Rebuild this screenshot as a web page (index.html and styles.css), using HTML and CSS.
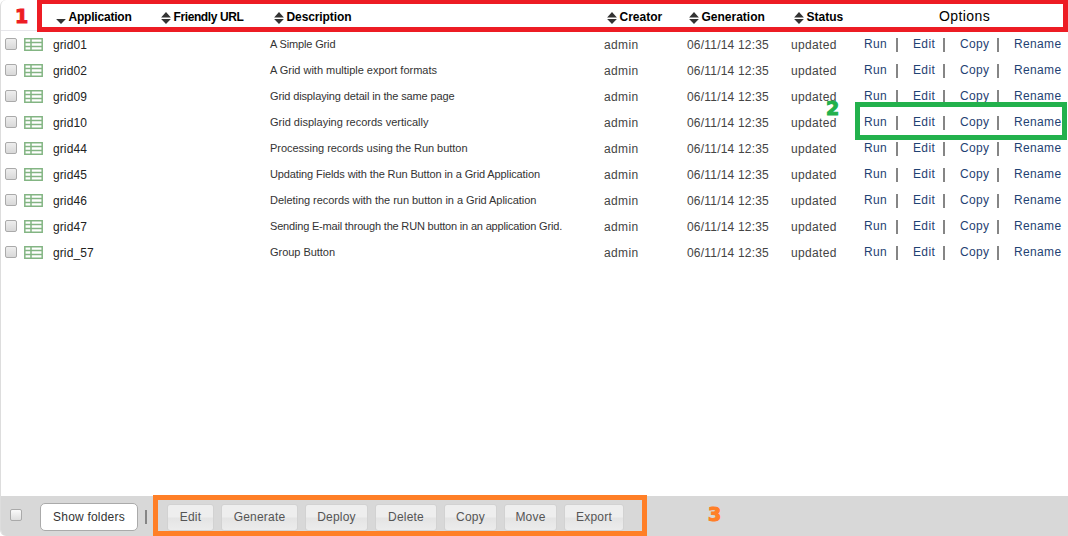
FILE: index.html
```
<!DOCTYPE html>
<html lang="en">
<head>
<meta charset="utf-8">
<title>Applications</title>
<link rel="stylesheet" href="styles.css">
</head>
<body>
<svg width="0" height="0" class="defs">
  <symbol id="sort" viewBox="0 0 10 12"><path d="M5 0L9.9 5.4H.1zM.1 7h9.8L5 12z" fill="#333"/></symbol>
  <symbol id="down" viewBox="0 0 10 12"><path d="M.1 7h9.8L5 12z" fill="#333"/></symbol>
  <symbol id="grid" viewBox="0 0 19 13"><path d="M.8 .8h17.4v11.4H.8zM7 1v11M1 4.5h17M1 8.5h17" fill="#fff" stroke="#83b583" stroke-width="1.5"/></symbol>
</svg>
<main class="panel">
  <header class="row head">
    <span class="c-app"><svg><use href="#down"/></svg><b class="h-app">Application</b></span>
    <span class="c-url"><svg><use href="#sort"/></svg><b class="h-url">Friendly URL</b></span>
    <span class="c-desc"><svg><use href="#sort"/></svg><b class="h-desc">Description</b></span>
    <span class="c-creator"><svg><use href="#sort"/></svg><b>Creator</b></span>
    <span class="c-gen"><svg><use href="#sort"/></svg><b>Generation</b></span>
    <span class="c-status"><svg><use href="#sort"/></svg><b>Status</b></span>
    <span class="c-options">Options</span>
  </header>
  <section id="rows" class="rows"></section>
  <footer class="bar">
    <i class="check light"></i>
    <button class="btn primary">Show folders</button>
    <i class="divider"></i>
    <div class="actions">
      <button class="btn w-edit">Edit</button>
      <button class="btn w-generate">Generate</button>
      <button class="btn w-deploy">Deploy</button>
      <button class="btn w-delete">Delete</button>
      <button class="btn w-copy">Copy</button>
      <button class="btn w-move">Move</button>
      <button class="btn w-export">Export</button>
    </div>
  </footer>
</main>
<i class="frame red"></i><i class="frame green"></i><i class="frame orange"></i>
<b class="mark one">1</b><b class="mark two">2</b><b class="mark three">3</b>
<script src="rows.js"></script>
</body>
</html>
```

FILE: styles.css
```
* { box-sizing: border-box; }
body { margin: 0; width: 1068px; height: 536px; overflow: hidden; background: #fff; font: 12px/16px "Liberation Sans", Arial, sans-serif; color: #444; }
.defs { position: absolute; }
.panel { height: 536px; display: flex; flex-direction: column; border-left: 1px solid #ddd; border-bottom-left-radius: 6px; border-top-left-radius: 6px; overflow: hidden; }
.row { display: grid; height: 26px; align-items: center; white-space: nowrap; }
.head { height: 31px; border-bottom: 1px solid #e6e6ea; padding: 3px 0 0 55px; grid-template-columns: 105px 113px 333px 82px 105px 145px 1fr; color: #000; }
.head span { display: flex; align-items: center; }
.head svg { width: 10px; height: 12px; margin: 3px 2.5px 0 0; flex: none; }
.head b { letter-spacing: 0; }
.head .h-app { letter-spacing: -.2px; }
.head .h-url { letter-spacing: -.4px; }
.head .h-desc { letter-spacing: -.1px; }
.head .c-options { font-size: 14px; letter-spacing: .4px; padding-bottom: 2px; }
.rows { flex: 1; }
.item { padding-left: 4px; grid-template-columns: 19px 29px 217px 334px 83px 104px 73px 1fr; }
.item > span { padding-top: 1px; letter-spacing: .35px; }
.item .name { color: #222; letter-spacing: .1px; }
.item .desc { font-size: 11px; color: #333; letter-spacing: 0; padding: 0; }
.item .date { letter-spacing: .2px; }
.icon { width: 19px; height: 13px; margin-top: 1px; }
.check { display: block; width: 12px; height: 12px; border: 1px solid #aaa; border-radius: 2px; background: linear-gradient(#eee, #d8d8d8); }
.links { display: grid; grid-template-columns: 32px 17px 30px 17px 37px 17px 1fr; align-items: center; color: #1f4273; }
.links a { letter-spacing: .35px; }
.links i, .divider { width: 2px; height: 14px; background: #858585; }
.links i { margin-top: 2px; }
.bar { height: 40px; background: #d8d8d8; display: flex; align-items: center; padding: 2px 0 0 9px; }
.bar .check { margin-top: -4px; }
.light { background: linear-gradient(#fafafa, #dedede); }
.btn { height: 27px; padding: 0; border: 1px solid #d2d2d2; border-radius: 3px; background: linear-gradient(#eee 48%, #e4e4e4 52%, #ececec); color: #555; font: inherit; letter-spacing: .2px; text-align: center; }
.primary { width: 98px; height: 28px; margin-left: 18px; background: #fff; border-color: #aaa; border-radius: 5px; color: #333; }
.divider { margin-left: 7px; }
.actions { display: flex; gap: 7px; margin-left: 20px; }
.w-edit { width: 47px; }
.w-generate { width: 77px; }
.w-deploy { width: 63px; }
.w-delete { width: 62px; }
.w-copy { width: 53px; }
.w-move { width: 53px; }
.w-export { width: 60px; }
.frame { position: absolute; border: 5px solid; }
.red { left: 37px; top: 0; width: 1031px; height: 32px; color: #ed1c24; border-top-width: 4px; }
.green { left: 855px; top: 102px; width: 212px; height: 38px; color: #22b14c; }
.orange { left: 153px; top: 495px; width: 494px; height: 41px; color: #ff7f27; }
.mark { position: absolute; font: bold 19px/20px "DejaVu Sans", sans-serif; -webkit-text-stroke: 1.1px currentColor; }
.one { left: 15px; top: 6px; color: #ed1c24; }
.two { left: 826px; top: 98px; color: #22b14c; }
.three { left: 708px; top: 504px; color: #ff7f27; }
```

FILE: rows.js
```
// name, description, width of the description text in pixels
const rows = [
  ["grid01", "A Simple Grid", 66],
  ["grid02", "A Grid with multiple export formats", 167.5],
  ["grid09", "Grid displaying detail in the same page", 184.5],
  ["grid10", "Grid displaying records vertically", 158.5],
  ["grid44", "Processing records using the Run button", 197.5],
  ["grid45", "Updating Fields with the Run Button in a Grid Application", 270.5],
  ["grid46", "Deleting records with the run button in a Grid Aplication", 267],
  ["grid47", "Sending E-mail through the RUN button in an application Grid.", 292],
  ["grid_57", "Group Button", 65]
];
const pen = document.createElement("canvas").getContext("2d");
pen.font = '11px "Liberation Sans", Arial, sans-serif';
const tracking = (text, width) => ((width - pen.measureText(text).width) / text.length).toFixed(3);
document.getElementById("rows").innerHTML = rows.map(([name, desc, width]) => `
  <div class="row item"><i class="check"></i><svg class="icon"><use href="#grid"/></svg>
  <span class="name">${name}</span><span class="desc" style="letter-spacing:${tracking(desc, width)}px">${desc}</span><span>admin</span>
  <span class="date">06/11/14 12:35</span><span>updated</span>
  <div class="links"><a>Run</a><i></i><a>Edit</a><i></i><a>Copy</a><i></i><a>Rename</a></div></div>`).join("");
```
